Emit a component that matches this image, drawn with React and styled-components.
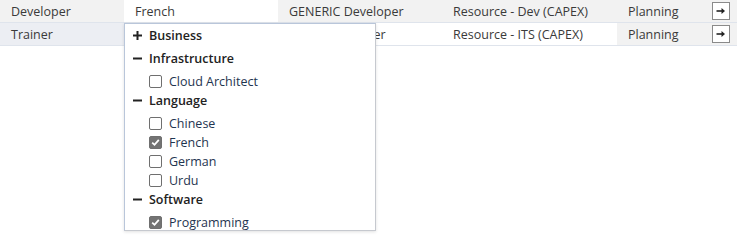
import React from "react";
import styled, { createGlobalStyle } from "styled-components";

const Global = createGlobalStyle`
  html, body { margin: 0; padding: 0; background: #fff; }
  body { font-family: "Open Sans", "Noto Sans", Arial, sans-serif; font-size: 12.5px; color: #333; }
`;

const Page = styled.div`
  width: 737px;
  height: 244px;
  position: relative;
  overflow: hidden;
`;

const Table = styled.div`
  width: 737px;
  display: flex;
  flex-direction: column;
`;

const Row = styled.div`
  display: grid;
  grid-template-columns: 124px 154px 164px 175px 88px 32px;
  height: 22px;
  border-bottom: 1px solid #dfe4ec;
  background: ${(p) => p.$bg};
`;

const Cell = styled.div`
  position: relative;
  display: flex;
  align-items: center;
  padding-left: 11px;
  white-space: nowrap;
  overflow: visible;
  color: #3a3a3a;
  background: ${(p) => p.$bg || "transparent"};
`;

const BtnCell = styled.div`
  display: flex;
  align-items: center;
  padding-left: 7px;
  background: ${(p) => p.$bg || "transparent"};
`;

const GoButton = styled.button`
  width: 18px;
  height: 18px;
  padding: 0;
  border: 1px solid #8a8a8a;
  background: #fff;
  display: flex;
  align-items: center;
  justify-content: center;
  cursor: pointer;
`;

const Dropdown = styled.div`
  position: absolute;
  top: 23px;
  left: 0;
  width: 252px;
  height: 208px;
  box-sizing: border-box;
  border: 1px solid #c6c9cf;
  border-top-color: #b9c6da;
  border-left-color: #b9c6da;
  background: #fff;
  box-shadow: 0 1px 3px rgba(0, 0, 0, 0.12);
  overflow: hidden;
  padding-top: 2px;
  z-index: 5;
`;

const Group = styled.div`
  display: flex;
  flex-direction: column;
`;

const GroupHeader = styled.div`
  display: flex;
  align-items: center;
  height: 19px;
  margin-bottom: 4px;
  padding-left: 8px;
  font-weight: 600;
  color: #222;
`;

const Toggle = styled.span`
  width: 9px;
  height: 9px;
  margin-right: 7px;
  display: inline-flex;
  align-items: center;
  justify-content: center;
`;

const Item = styled.label`
  display: flex;
  align-items: center;
  height: 19px;
  padding-left: 24px;
  color: #1f3550;
`;

const Box = styled.span`
  width: 13px;
  height: 13px;
  box-sizing: border-box;
  border: 1px solid #6f6f6f;
  border-radius: 2px;
  margin-right: 7px;
  display: inline-flex;
  align-items: center;
  justify-content: center;
  background: ${(p) => (p.$checked ? "#737373" : "#fff")};
`;

const ToggleIcon = ({ open }) => (
  <Toggle>
    <svg width="9" height="9" viewBox="0 0 9 9">
      <rect x="0" y="3.5" width="9" height="2" fill="#222" />
      {!open && <rect x="3.5" y="0" width="2" height="9" fill="#222" />}
    </svg>
  </Toggle>
);

const Check = ({ checked }) => (
  <Box $checked={checked}>
    {checked && (
      <svg width="9" height="9" viewBox="0 0 9 9">
        <path d="M1.2 4.6 L3.5 6.8 L7.8 1.8" stroke="#fff" strokeWidth="1.8" fill="none" />
      </svg>
    )}
  </Box>
);

const Arrow = () => (
  <svg width="10" height="8" viewBox="0 0 10 8">
    <path d="M0.5 4 H6" stroke="#222" strokeWidth="1.6" />
    <path d="M5.5 1 L9 4 L5.5 7 Z" fill="#222" />
  </svg>
);

const tree = [
  { name: "Business", open: false, items: [] },
  { name: "Infrastructure", open: true, items: [["Cloud Architect", false]] },
  {
    name: "Language",
    open: true,
    items: [
      ["Chinese", false],
      ["French", true],
      ["German", false],
      ["Urdu", false],
    ],
  },
  { name: "Software", open: true, items: [["Programming", true]] },
];

export default function App() {
  return (
    <>
      <Global />
      <Page>
        <Table>
          <Row $bg="#f2f2f2">
            <Cell>Developer</Cell>
            <Cell $bg="#fff">
              French
              <Dropdown>
                {tree.map((g) => (
                  <Group key={g.name}>
                    <GroupHeader>
                      <ToggleIcon open={g.open} />
                      {g.name}
                    </GroupHeader>
                    {g.open &&
                      g.items.map(([n, c]) => (
                        <Item key={n}>
                          <Check checked={c} />
                          {n}
                        </Item>
                      ))}
                  </Group>
                ))}
              </Dropdown>
            </Cell>
            <Cell>GENERIC Developer</Cell>
            <Cell>Resource - Dev (CAPEX)</Cell>
            <Cell>Planning</Cell>
            <BtnCell>
              <GoButton>
                <Arrow />
              </GoButton>
            </BtnCell>
          </Row>
          <Row $bg="#fff">
            <Cell $bg="#eceef3">Trainer</Cell>
            <Cell $bg="#fff" />
            <Cell>GENERIC Trainer</Cell>
            <Cell>Resource - ITS (CAPEX)</Cell>
            <Cell $bg="#f2f2f2">Planning</Cell>
            <BtnCell $bg="#f2f2f2">
              <GoButton>
                <Arrow />
              </GoButton>
            </BtnCell>
          </Row>
        </Table>
      </Page>
    </>
  );
}
